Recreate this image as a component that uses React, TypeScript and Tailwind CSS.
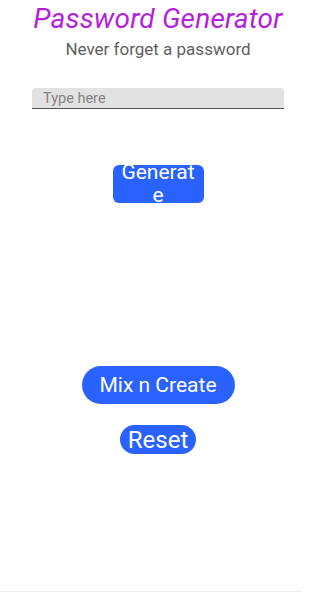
import { useState } from 'react';

export default function App() {
  const [text, setText] = useState('');

  return (
    <div className="w-[302px] h-[592px] bg-white pl-[14px] flex flex-col items-center font-['Roboto',sans-serif] border-b border-[#eeeeee]">
      {/* Header */}
      <h1 className="mt-[2px] text-[28px] leading-[34px] italic text-[#b41edc] tracking-[0.2px]">Password Generator</h1>
      <p className="mt-[3px] text-[17px] leading-[20px] text-[#606060]">Never forget a password</p>

      {/* Input */}
      <input
        value={text}
        onChange={e => setText(e.target.value)}
        placeholder="Type here"
        className="mt-[29px] w-[252px] h-[21px] bg-[#e2e2e2] rounded-t-[4px] border-b border-[#555555] px-[11px] text-[14.5px] leading-[20px] text-[#333] placeholder:text-[#858585] outline-none"
      />

      {/* Generate */}
      <button className="mt-[56px] w-[91px] h-[38px] bg-[#2962ff] rounded-[6px] px-[8px] text-white text-[21px] leading-[23px] flex items-center justify-center text-center overflow-hidden break-all">
        Generate
      </button>

      {/* Actions */}
      <button className="mt-[163px] w-[153px] h-[38px] bg-[#2962ff] rounded-full text-white text-[21px] leading-[24px] flex items-center justify-center">
        Mix n Create
      </button>
      <button className="mt-[21px] w-[76px] h-[29px] bg-[#2962ff] rounded-full text-white text-[24px] leading-[28px] flex items-center justify-center">
        Reset
      </button>
    </div>
  );
}
